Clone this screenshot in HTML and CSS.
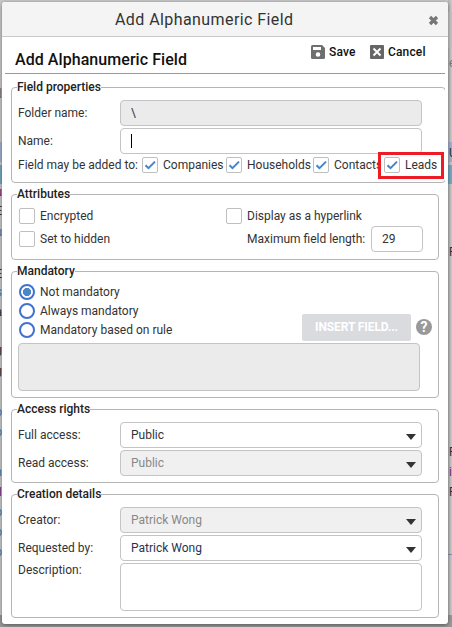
FILE: index.html
```
<!DOCTYPE html>
<html lang="en">
<head>
  <meta charset="UTF-8">
  <title>Add Alphanumeric Field</title>
  <link rel="stylesheet" href="styles.css">
</head>
<body>
  <!-- page behind the dialog -->
  <div class="backdrop">
    <div class="side left">
      <i class="bar head"></i>
      <i class="bar selected"></i>
      <span class="grey t1">d</span>
      <span class="purple t2">u</span>
      <span class="t3">E</span>
      <span class="blue t4">u</span>
      <span class="t5">E</span>
      <span class="blue t6">s</span>
      <span class="t7">a</span>
      <span class="t8">J</span>
      <span class="t9">J</span>
      <span class="blue t10">o</span>
      <span class="blue t11">o</span>
      <span class="blue t12">n</span>
      <span class="purple t13">I</span>
      <span class="blue t14">o</span>
      <span class="blue t15">o</span>
      <span class="blue t16">o</span>
    </div>
    <div class="side right">
      <i class="bar light"></i>
      <i class="bar head"></i>
      <i class="bar selected"></i>
      <i class="bar line"></i>
      <span class="grey r1">e</span>
      <span class="r2">U</span>
      <span class="r3">P</span>
      <span class="r4">P</span>
      <span class="purple r5">i</span>
      <span class="r6">P</span>
    </div>
  </div>

  <div class="dialog">
    <header>
      <h1>Add Alphanumeric Field</h1>
      <svg class="close" width="11" height="11" viewBox="0 0 11 11"><path d="M2 2l7 7M9 2l-7 7" stroke="#777" stroke-width="3.2"/></svg>
    </header>
    <div class="toolbar">
      <h2>Add Alphanumeric Field</h2>
      <a class="tool save">
        <svg width="14" height="14" viewBox="0 0 14 14"><path fill="#6f6f6f" fill-rule="evenodd" d="M1.500 0H11l3 3v9.500a1.500 1.500 0 0 1-1.500 1.500h-11A1.500 1.500 0 0 1 0 12.500v-11A1.500 1.500 0 0 1 1.500 0zM2 2v3h8V2zM7 7.200a2.300 2.300 0 1 0 0 4.600 2.300 2.300 0 0 0 0-4.600z"/></svg>
        <span>Save</span>
      </a>
      <a class="tool cancel">
        <svg width="14" height="14" viewBox="0 0 14 14"><rect width="14" height="14" rx="1" fill="#666"/><path d="M3.500 3.500l7 7M10.500 3.500l-7 7" stroke="#fff" stroke-width="1.900"/></svg>
        <span>Cancel</span>
      </a>
    </div>

    <div class="content">
      <fieldset class="properties">
        <legend>Field properties</legend>
        <div class="row">
          <label>Folder name:</label>
          <div class="input disabled">\</div>
        </div>
        <div class="row">
          <label>Name:</label>
          <div class="input"><span class="caret"></span></div>
        </div>
        <div class="added">
          <label class="w1">Field may be added to:</label>
          <span class="check on w2"><svg width="14" height="14" viewBox="0 0 14 14"><path d="M2.500 7.200l3 3L12 3.600"/></svg></span>
          <label class="w3">Companies</label>
          <span class="check on w2"><svg width="14" height="14" viewBox="0 0 14 14"><path d="M2.500 7.200l3 3L12 3.600"/></svg></span>
          <label class="w4">Households</label>
          <span class="check on w2"><svg width="14" height="14" viewBox="0 0 14 14"><path d="M2.500 7.200l3 3L12 3.600"/></svg></span>
          <label class="w5">Contacts</label>
          <div class="highlight">
            <span class="check on"><svg width="14" height="14" viewBox="0 0 14 14"><path d="M2.500 7.200l3 3L12 3.600"/></svg></span>
            <label>Leads</label>
          </div>
        </div>
      </fieldset>

      <fieldset class="attributes">
        <legend>Attributes</legend>
        <div class="attr-row first">
          <span class="check"></span><label class="col">Encrypted</label>
          <span class="check"></span><label>Display as a hyperlink</label>
        </div>
        <div class="attr-row">
          <span class="check"></span><label class="col wide">Set to hidden</label>
          <label class="max">Maximum field length:</label>
          <div class="input short">29</div>
        </div>
      </fieldset>

      <fieldset class="mandatory">
        <legend>Mandatory</legend>
        <div class="rules">
          <div class="radios">
            <div class="option"><span class="radio on"></span><label>Not mandatory</label></div>
            <div class="option"><span class="radio"></span><label>Always mandatory</label></div>
            <div class="option"><span class="radio"></span><label>Mandatory based on rule</label></div>
          </div>
          <div class="insert">INSERT FIELD...</div>
          <span class="help">?</span>
        </div>
        <div class="area disabled"></div>
      </fieldset>

      <fieldset class="access">
        <legend>Access rights</legend>
        <div class="row">
          <label>Full access:</label>
          <div class="input select">Public</div>
        </div>
        <div class="row">
          <label>Read access:</label>
          <div class="input select locked">Public</div>
        </div>
      </fieldset>

      <fieldset class="creation">
        <legend>Creation details</legend>
        <div class="row">
          <label>Creator:</label>
          <div class="input select locked">Patrick Wong</div>
        </div>
        <div class="row">
          <label>Requested by:</label>
          <div class="input select person">Patrick Wong</div>
        </div>
        <div class="row top">
          <label>Description:</label>
          <div class="input description"></div>
        </div>
      </fieldset>
    </div>
  </div>
</body>
</html>
```

FILE: styles.css
```
* {
  box-sizing: border-box;
}
body {
  margin: 0;
  padding: 2px 4px 3px 2px;
  width: 452px;
  height: 627px;
  overflow: hidden;
  background: #c9c9c9;
  font-family: Roboto, "Liberation Sans", sans-serif;
  font-size: 12px;
  line-height: 15px;
  letter-spacing: 0;
  color: #333;
}
h1, h2 {
  margin: 0;
}

/* page behind */
.backdrop {
  position: absolute;
  top: 0;
  left: 0;
  width: 452px;
  height: 627px;
  border-bottom: 12px solid #999;
}
.side {
  position: absolute;
  top: 0;
  width: 4px;
  height: 615px;
  overflow: hidden;
}
.side.left { left: -2px; }
.side.right { right: 0; background: linear-gradient(90deg, #b5b5b5, #cdcdcd); }
.side span, .bar {
  position: absolute;
  right: 0;
}
.right span { right: auto; left: 1px; }
.bar { left: 0; }
.bar.light { top: 12px; height: 36px; background: #c4c4c4; }
.bar.head { top: 142px; height: 20px; background: #a3b1cf; }
.bar.selected { top: 165px; height: 19px; background: #75a9c5; }
.bar.line { top: 554px; height: 1px; background: #7f91b8; }
.grey { color: #777; }
.blue { color: #3b82b4; }
.purple { color: #7a2a7c; }
.t1 { top: 87px; }
.t2 { top: 185px; }
.t3 { top: 204px; }
.t4 { top: 225px; }
.t5 { top: 267px; }
.t6 { top: 285px; }
.t7 { top: 305px; }
.t8 { top: 345px; }
.t9 { top: 366px; }
.t10 { top: 405px; }
.t11 { top: 425px; }
.t12 { top: 465px; }
.t13 { top: 485px; }
.t14 { top: 505px; }
.t15 { top: 525px; }
.t16 { top: 545px; }
.r1 { top: 56px; }
.r2 { top: 146px; }
.r3 { top: 245px; }
.r4 { top: 445px; }
.r5 { top: 465px; }
.r6 { top: 485px; }

.dialog {
  position: relative;
  width: 446px;
  height: 622px;
  background: #fff;
  border-radius: 3px;
  box-shadow: 0 1px 4px rgba(0, 0, 0, 0.45);
}
header {
  display: flex;
  align-items: center;
  height: 35px;
  padding: 0 9px 0 113px;
  background: #f4f4f4;
  border-bottom: 1px solid #c8c8c8;
  border-radius: 3px 3px 0 0;
}
header h1 {
  flex: 1;
  font-size: 16px;
  font-weight: 400;
  letter-spacing: 0.42px;
  white-space: nowrap;
}
.close {
  margin-top: 2px;
}
.toolbar {
  display: flex;
  height: 37px;
  margin: 0 3px;
  padding-left: 10px;
  border-bottom: 1px solid #999;
}
.toolbar h2 {
  width: 296px;
  padding-top: 13px;
  font-size: 16px;
  line-height: 19px;
  font-weight: 500;
  letter-spacing: 0.06px;
  color: #111;
}
.tool {
  display: flex;
  align-items: center;
  gap: 4px;
  height: 15px;
  margin-top: 7px;
  font-weight: 500;
  letter-spacing: 0.15px;
  color: #111;
}
.tool span { padding-top: 1px; }
.save { width: 59px; }

.content {
  width: 443px;
  padding: 6px 0 0 9px;
  overflow: hidden;
}
fieldset {
  width: 428px;
  margin: 0 0 4px;
  padding: 0 0 0 6px;
  border: 1px solid #b5b5b5;
  border-radius: 4px;
  min-width: 0;
}
legend {
  margin-left: -1px;
  padding: 0;
  height: 15px;
  font-weight: 500;
  font-size: 12px;
  color: #222;
}
.properties { width: 435px; height: 103px; }
.attributes { height: 73px; }
.mandatory { height: 134px; }
.access { height: 81px; }
.creation { height: 131px; }

.row {
  display: flex;
  align-items: center;
  margin-bottom: 2px;
}
legend + .row { margin-top: 5px; }
.row label { width: 102px; }
.row.top { align-items: flex-start; }
.input {
  width: 302px;
  height: 26px;
  padding-left: 10px;
  border: 1px solid #c4c4c4;
  border-radius: 4px;
  background: #fff;
  line-height: 24px;
}
.disabled { background: #ebebeb; }
.locked { background: #f0f0f0; color: #888; }
.select {
  display: flex;
  justify-content: space-between;
  padding-right: 5px;
}
.select::after {
  content: '';
  margin-top: 11px;
  width: 0;
  height: 0;
  border: 5.5px solid transparent;
  border-top: 6px solid #333;
  border-bottom: 0;
}
.person { color: #1d3557; }
.caret {
  display: block;
  width: 1px;
  height: 14px;
  margin-top: 5px;
  background: #000;
}

.added {
  display: flex;
  align-items: center;
  height: 22px;
  margin-top: -2px;
  white-space: nowrap;
}
.w1 { width: 124px; }
.w2 { margin-right: 5px; }
.w3 { width: 63px; }
.w4 { width: 66px; }
.w5 { width: 44px; }
.highlight {
  display: flex;
  align-items: center;
  flex: none;
  gap: 5px;
  position: relative;
  width: 66px;
  height: 27px;
  padding-left: 3px;
  border: 3px solid #ed1c24;
  background: #fff;
}
.check {
  flex: none;
  width: 16px;
  height: 16px;
  border: 1px solid #bfbfbf;
  border-radius: 2px;
  background: #fff;
}
.check svg {
  display: block;
}
.check path {
  fill: none;
  stroke: #4285c8;
  stroke-width: 2;
}

.attr-row {
  display: flex;
  align-items: center;
  height: 26px;
  margin-left: 1px;
}
.attr-row.first { height: 16px; margin: 6px 0 2px 1px; }
.attr-row .check + label { margin-left: 5px; }
.col { width: 186px; }
.col.wide { width: 207px; }
.max { width: 124px; }
.short { width: 52px; }

.rules {
  display: flex;
  height: 64px;
}
.radios { width: 284px; padding-top: 4px; }
.option {
  display: flex;
  align-items: center;
  gap: 5px;
  height: 19px;
  margin-left: 1px;
}
.radio {
  width: 16px;
  height: 16px;
  margin-bottom: 1px;
  border: 2px solid #3f72cf;
  border-radius: 50%;
}
.radio.on {
  background: radial-gradient(circle, #4a86c8 3.8px, #fff 4.4px);
}
.insert {
  width: 109px;
  height: 27px;
  margin-top: 35px;
  border-radius: 2px;
  background: #dadbdf;
  color: #fff;
  font-weight: 700;
  line-height: 26px;
  letter-spacing: -0.1px;
  text-align: center;
}
.help {
  width: 16px;
  height: 16px;
  margin: 40px 0 0 5px;
  border-radius: 50%;
  background: #999;
  color: #fff;
  font-size: 14px;
  font-weight: 700;
  line-height: 17px;
  letter-spacing: 0;
  text-align: center;
}
.area {
  width: 402px;
  height: 48px;
  border: 1px solid #c4c4c4;
  border-radius: 4px;
}
.description { height: 48px; }
```
